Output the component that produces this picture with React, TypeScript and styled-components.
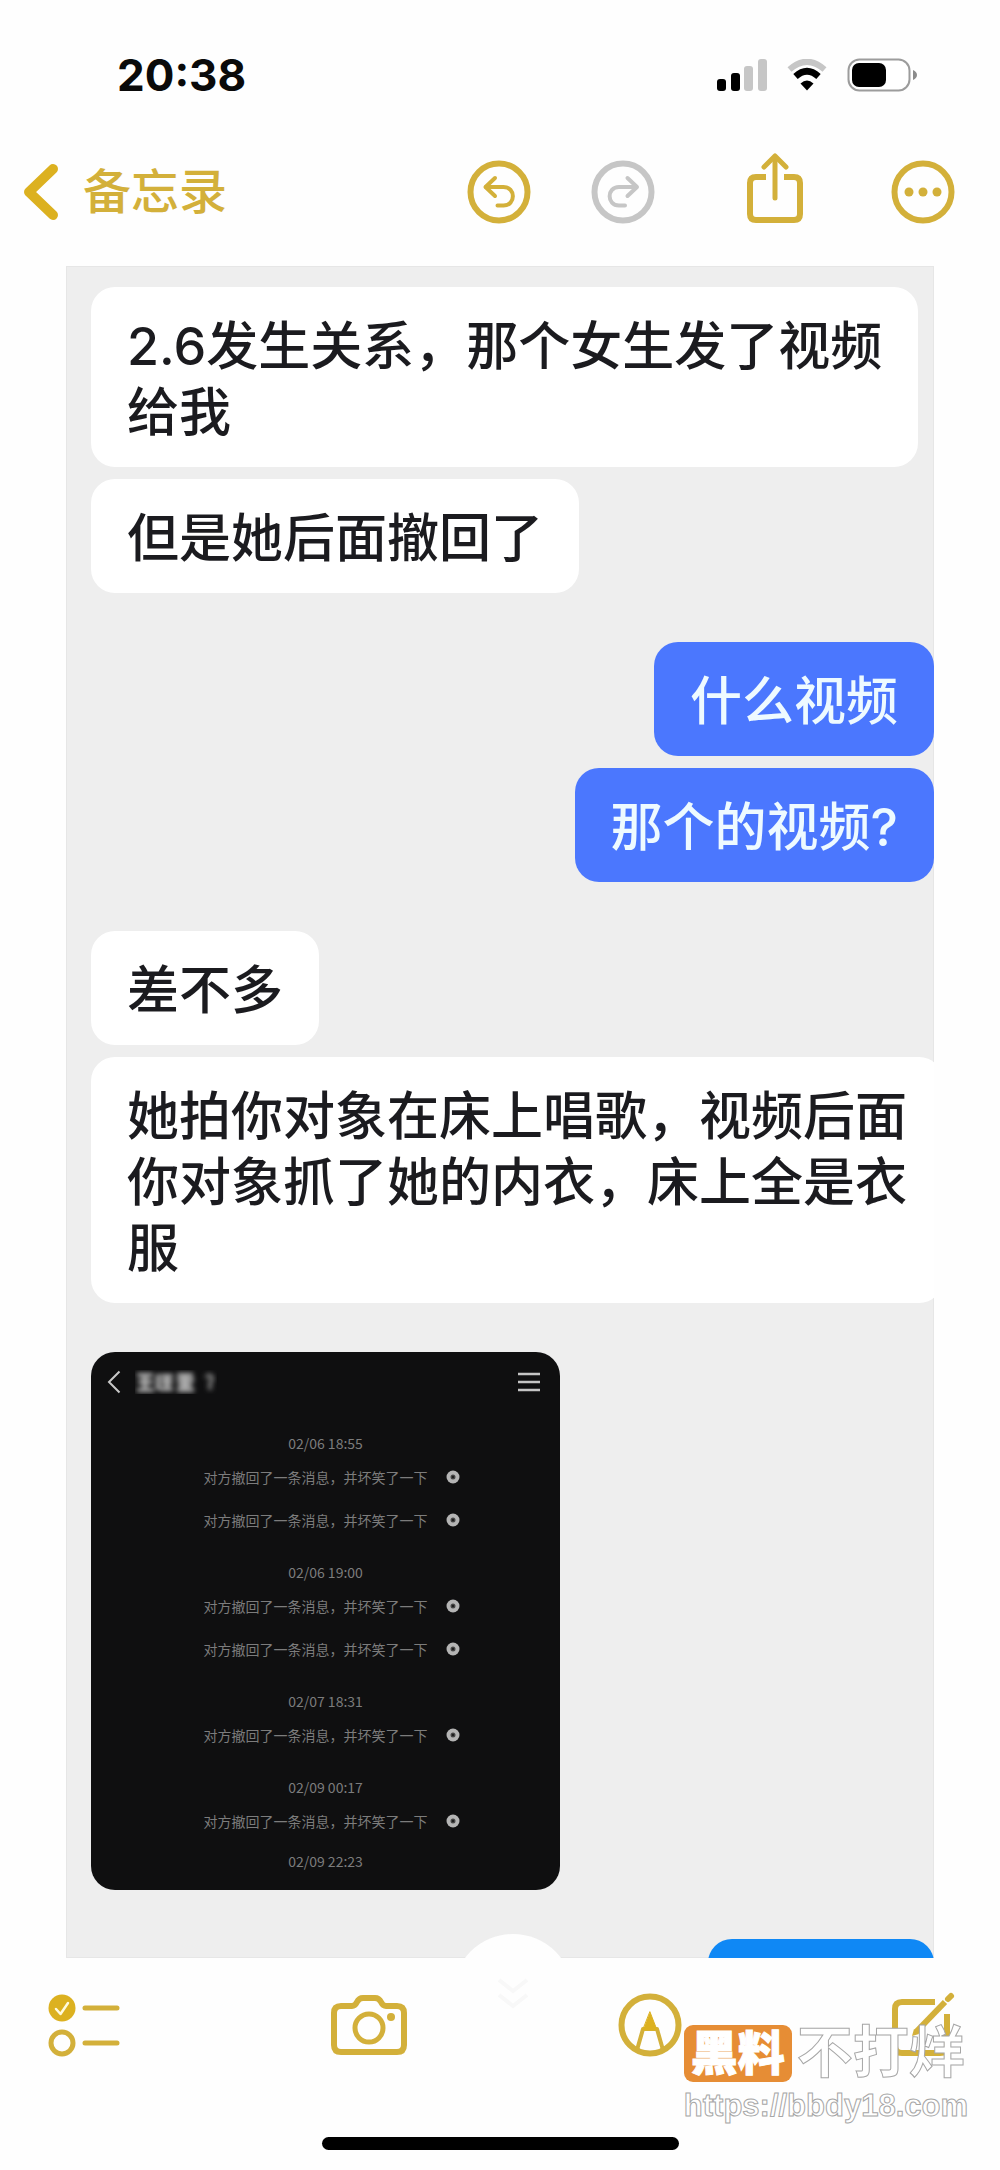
import type { ReactNode } from 'react'
import { createGlobalStyle, css, styled } from 'styled-components'

const accent = '#d3b03a'
const accentStrong = '#dcb120'
const muted = '#c6c6c6'

const GlobalStyle = createGlobalStyle`
  * {
    box-sizing: border-box;
  }
  body {
    margin: 0;
    background: #fefefe;
    font-family: Inter, 'Noto Sans CJK SC', sans-serif;
  }
`

const PageS = styled.div`
  position: relative;
  display: flex;
  flex-flow: column nowrap;
  height: 100vh;
  overflow: hidden;
`

const StatusBarS = styled.header`
  display: flex;
  flex: none;
  align-items: center;
  height: 150px;
  padding: 0 82px 0 117px;
`
const TimeS = styled.time`
  margin-right: auto;
  color: #0a0a0a;
  font-size: 44px;
  font-weight: 700;
  line-height: 52px;
`
const StatusIconsS = styled.div`
  display: flex;
  align-items: center;
  gap: 20px;
`

const NavS = styled.nav`
  display: flex;
  flex: none;
  align-items: center;
  gap: 88px;
  height: 84px;
  padding: 0 46px 0 24px;
`
const BackLinkS = styled.a`
  display: flex;
  align-items: center;
  gap: 24px;
  margin-right: auto;
  color: ${accent};
  font-size: 48px;
  font-weight: 500;
  line-height: 64px;
  text-decoration: none;
`
const NavGroupS = styled.div`
  display: flex;
  gap: 62px;
`
const IconButtonS = styled.button<{ $muted?: boolean }>`
  display: flex;
  padding: 0;
  border: 0;
  background: none;
  color: ${({ $muted }) => ($muted ? muted : accent)};

  & > svg {
    overflow: visible;
  }
`

const NoteS = styled.main`
  flex: 1;
  min-height: 0;
  margin: 32px 66px 0;
  padding: 21px 0 0 25px;
  overflow: hidden;
  background: #eeeeee;
  box-shadow: inset 0 0 0 1px #e6e6e6;
`
const ThreadS = styled.div`
  display: flex;
  flex-flow: column nowrap;
  gap: 49px;
`
const TurnS = styled.section<{ $mine?: boolean }>`
  display: flex;
  flex-flow: column nowrap;
  align-items: ${({ $mine }) => ($mine ? 'flex-end' : 'flex-start')};
  gap: 12px;
`
type BubbleTone = 'white' | 'indigo' | 'blue'
const bubbleColors: Record<BubbleTone, string> = {
  white: '#ffffff',
  indigo: '#4b77fe',
  blue: '#0f88f5',
}
const BubbleS = styled.p<{ $tone: BubbleTone }>`
  flex: none;
  min-height: 114px;
  margin: 0;
  padding: 27px 36px 21px;
  border-radius: 24px;
  font-size: 52px;
  font-weight: 500;
  line-height: 66px;
  white-space: pre;
  ${({ $tone }) => css`
    background: ${bubbleColors[$tone]};
    color: ${$tone === 'white' ? '#1b1b1f' : '#eefaff'};
  `}
`
const NextBubbleS = styled(BubbleS)`
  width: 226px;
`

const ShotS = styled.article`
  width: 469px;
  padding-bottom: 18px;
  border-radius: 24px;
  background: #0f0f10;
  color: #7c7c7c;
  font-family: 'Noto Sans CJK SC', sans-serif;
  font-size: 14px;
  line-height: 22px;
`
const ShotHeaderS = styled.header`
  display: flex;
  align-items: center;
  height: 60px;
  margin-bottom: 20px;
  padding: 0 20px 0 16px;
  gap: 14px;
`
const HiddenNameS = styled.svg`
  margin-right: auto;
`
const ShotGroupS = styled.div<{ $before: number }>`
  display: flex;
  flex-flow: column nowrap;
  align-items: center;
  gap: 21px;
  margin-top: ${({ $before }) => $before}px;
`
const ShotTimeS = styled.time`
  margin-bottom: -9px;

  &:last-child {
    margin-bottom: 0;
  }
`
const RecallS = styled.div`
  display: flex;
  align-items: center;
  gap: 18px;
  padding-left: 12px;
`

const ToolbarS = styled.footer`
  position: relative;
  display: flex;
  flex: none;
  align-items: center;
  justify-content: space-between;
  height: 134px;
  padding: 0 46px 0 48px;
`
// sits on the seam between the note and the toolbar
const ScrollDownS = styled.button`
  position: absolute;
  top: -24px;
  left: calc(50% - 47px);
  display: flex;
  align-items: center;
  justify-content: center;
  width: 120px;
  height: 120px;
  padding: 0;
  border: 0;
  border-radius: 50%;
  background: #fefefe;
`
const HomeBarS = styled.div`
  flex: none;
  align-self: center;
  width: 357px;
  height: 13px;
  margin: 45px 0 20px;
  border-radius: 7px;
  background: #000000;
`

const WatermarkS = styled.div`
  position: absolute;
  right: 32px;
  bottom: 44px;
  display: flex;
  flex-flow: column nowrap;
  gap: 4px;
  color: #ffffff;
  font-weight: 700;
`
const WatermarkTitleS = styled.div`
  display: flex;
  align-items: center;
  gap: 5px;
  font-family: 'Noto Sans CJK SC', sans-serif;
`
const WatermarkTagS = styled.span`
  padding: 0 7px 8px;
  border-radius: 9px;
  background: #e68d35;
  font-size: 47px;
  font-weight: 900;
  line-height: 49px;
  -webkit-text-stroke: 1px #ffffff;
`
const WatermarkNameS = styled.span`
  padding-bottom: 12px;
  font-size: 56px;
  line-height: 45px;
  -webkit-text-stroke: 1px #a6a6a6;
`
const WatermarkUrlS = styled.span`
  font-family: 'Liberation Sans', sans-serif;
  font-size: 31px;
  line-height: 40px;
  -webkit-text-stroke: 1px #a6a6a6;
`

const SignalIcon = () => (
  <svg width="50" height="32" viewBox="0 0 50 32" aria-hidden="true">
    <rect x="0" y="20" width="9" height="12" rx="3" fill="#000" />
    <rect x="14" y="14" width="9" height="18" rx="3" fill="#000" />
    <rect x="27" y="7" width="9" height="25" rx="3" fill={muted} />
    <rect x="41" y="0" width="9" height="32" rx="3" fill={muted} />
  </svg>
)

const WifiIcon = () => (
  <svg width="40" height="32" viewBox="0 0 40 32" fill="none" aria-hidden="true">
    <path d="M2.500 10.500 Q20 -5 37.500 10.500" stroke={muted} strokeWidth="6" />
    <path d="M8.500 17.500 Q20 7 31.500 17.500" stroke="#000" strokeWidth="6.500" />
    <path d="M13.500 24.500 Q20 18.500 26.500 24.500 L20 31.500 Z" fill="#000" />
  </svg>
)

const BatteryIcon = () => (
  <svg width="71" height="34" viewBox="0 0 71 34" aria-hidden="true">
    <rect x="1.500" y="1.500" width="61" height="31" rx="11" fill="#fff" stroke="#9c9c9c" strokeWidth="2" />
    <rect x="5" y="5" width="34" height="24" rx="7" fill="#000" />
    <path d="M66 12 Q70 14 70 17 Q70 20 66 22 Z" fill="#8b8b8b" />
  </svg>
)

const BackIcon = () => (
  <svg width="35" height="58" viewBox="0 0 35 58" fill="none" aria-hidden="true">
    <path d="M29 6 L5 29 L29 52" stroke={accentStrong} strokeWidth="10" strokeLinecap="round" strokeLinejoin="round" />
  </svg>
)

const CircleIcon = ({ children }: { children: ReactNode }) => (
  <svg
    width="62"
    height="62"
    viewBox="0 0 62 62"
    fill="none"
    stroke="currentColor"
    strokeWidth="5"
    strokeLinecap="round"
    strokeLinejoin="round"
    aria-hidden="true"
  >
    <circle cx="31" cy="31" r="28.500" strokeWidth="6" />
    {children}
  </svg>
)

const UndoIcon = () => (
  <CircleIcon>
    <path d="M27 17 L17.500 26 L27 35" strokeWidth="4" />
    <path d="M18 26 H35.500 C48 26 48 44.500 35.500 44.500 H29.500" strokeWidth="4" />
  </CircleIcon>
)

const RedoIcon = () => (
  <CircleIcon>
    <path d="M35.500 17 L45 26 L35.500 35" strokeWidth="4" />
    <path d="M44 26 H27 C14.500 26 14.500 44.500 27 44.500 H33" strokeWidth="4" />
  </CircleIcon>
)

const ShareIcon = () => (
  <svg
    width="62"
    height="82"
    viewBox="0 0 62 82"
    fill="none"
    stroke="currentColor"
    strokeWidth="6"
    strokeLinejoin="round"
    aria-hidden="true"
  >
    <path d="M24 26 H14 Q8 26 8 32 V63 Q8 69 14 69 H52 Q58 69 58 63 V32 Q58 26 52 26 H42" />
    <path d="M33 47 V6" strokeWidth="5" strokeLinecap="round" />
    <path d="M22 16 L33 5 L44 16" strokeWidth="5" strokeLinecap="round" />
  </svg>
)

const MoreIcon = () => (
  <CircleIcon>
    <g fill="currentColor" stroke="none">
      <circle cx="17" cy="31" r="4.500" />
      <circle cx="31" cy="31" r="4.500" />
      <circle cx="45" cy="31" r="4.500" />
    </g>
  </CircleIcon>
)

const ChecklistIcon = () => (
  <svg width="72" height="62" viewBox="0 0 72 62" fill="none" strokeLinecap="round" aria-hidden="true">
    <circle cx="14" cy="14" r="13.500" fill={accentStrong} />
    <path d="M8 15 L12.500 20 L20 9" stroke="#fffbe0" strokeWidth="2.500" strokeLinejoin="round" />
    <circle cx="14" cy="49" r="11" stroke="currentColor" strokeWidth="5" />
    <path d="M37 14 H69 M37 49 H69" stroke="currentColor" strokeWidth="5" />
  </svg>
)

const CameraIcon = () => (
  <svg width="76" height="62" viewBox="0 0 76 62" fill="none" stroke="currentColor" strokeLinejoin="round" aria-hidden="true">
    <path
      d="M10 12 H21 Q24 12 26 8 Q28 4 32 4 H44 Q48 4 50 8 Q52 12 55 12 H66 Q73 12 73 19 V51 Q73 58 66 58 H10 Q3 58 3 51 V19 Q3 12 10 12 Z"
      strokeWidth="6"
    />
    <circle cx="38" cy="34" r="14" strokeWidth="5" />
    <circle cx="60" cy="23" r="4" fill="currentColor" stroke="none" />
  </svg>
)

const MarkupIcon = () => (
  <CircleIcon>
    <path d="M18 56 L24 35 H38 L44 56" strokeWidth="4" />
    <path d="M31 18 L38 36 H24 Z" fill={accentStrong} stroke={accentStrong} strokeWidth="1" />
  </CircleIcon>
)

const ComposeIcon = () => (
  <svg width="62" height="64" viewBox="0 0 62 64" fill="none" stroke="currentColor" strokeWidth="6" aria-hidden="true">
    <path d="M43 9 H10 Q3 9 3 16 V53 Q3 60 10 60 H48 Q55 60 55 53 V21" />
    <path d="M24 39 L53 9" strokeWidth="6" />
    <path d="M56 6 L59 3" strokeWidth="6" strokeLinecap="round" />
    <path d="M20 43 L22 36 L27 41 Z" fill="currentColor" stroke="none" />
  </svg>
)

const GearDot = () => (
  <svg width="14" height="14" viewBox="0 0 14 14" aria-hidden="true">
    <circle cx="7" cy="7" r="6.500" fill="#b4b4b4" />
    <circle cx="7" cy="7" r="2.500" fill="#4a4a4a" />
    <path d="M7 5.500 L8.500 7 L7 8.500 L5.500 7 Z" fill="#191919" />
  </svg>
)

const recallText = '对方撤回了一条消息，并坏笑了一下'
const recallGroups = [
  { time: '02/06 18:55', count: 2, before: 0 },
  { time: '02/06 19:00', count: 2, before: 30 },
  { time: '02/07 18:31', count: 1, before: 30 },
  { time: '02/09 00:17', count: 1, before: 30 },
  { time: '02/09 22:23', count: 0, before: 18 },
]

const RecallShot = () => (
  <ShotS>
    <ShotHeaderS>
      <svg width="14" height="24" viewBox="0 0 14 24" fill="none" aria-hidden="true">
        <path d="M12.500 1.500 L2 12 L12.500 22.500" stroke="#c8c8c8" strokeWidth="2" />
      </svg>
      <HiddenNameS width="82" height="24" viewBox="0 0 82 24" aria-hidden="true">
        <filter id="smudge" x="-20%" y="-40%" width="140%" height="180%">
          <feGaussianBlur stdDeviation="2.500" />
        </filter>
        <g filter="url(#smudge)" stroke="#b4b4b4" strokeWidth="4" fill="none">
          <path d="M2 5 H18 M3 12 H18 M2 20 H19 M10 4 V20" />
          <path d="M23 4 V20 M26 6 H38 M26 12 H38 M25 19 H38 M32 6 V19" />
          <path d="M42 5 H58 M42 10 H59 M43 15 H57 M42 20 H59 M50 3 V20" />
          <path d="M71 8 Q74 3 77 7 Q78 10 75 13 V20" stroke="#777" />
        </g>
      </HiddenNameS>
      <svg width="22" height="20" viewBox="0 0 22 20" aria-hidden="true">
        <path d="M0 2 H22 M0 10 H22 M0 18 H22" stroke="#c4c4c4" strokeWidth="2.500" />
      </svg>
    </ShotHeaderS>
    {recallGroups.map(({ time, count, before }) => (
      <ShotGroupS key={time} $before={before}>
        <ShotTimeS>{time}</ShotTimeS>
        {Array.from({ length: count }, (_, i) => (
          <RecallS key={i}>
            {recallText}
            <GearDot />
          </RecallS>
        ))}
      </ShotGroupS>
    ))}
  </ShotS>
)

export default function App() {
  return (
    <>
      <GlobalStyle />
      <PageS>
        <StatusBarS>
          <TimeS>20:38</TimeS>
          <StatusIconsS>
            <SignalIcon />
            <WifiIcon />
            <BatteryIcon />
          </StatusIconsS>
        </StatusBarS>
        <NavS>
          <BackLinkS href="#notes">
            <BackIcon />
            备忘录
          </BackLinkS>
          <NavGroupS>
            <IconButtonS aria-label="撤销">
              <UndoIcon />
            </IconButtonS>
            <IconButtonS aria-label="重做" $muted>
              <RedoIcon />
            </IconButtonS>
          </NavGroupS>
          <IconButtonS aria-label="共享">
            <ShareIcon />
          </IconButtonS>
          <IconButtonS aria-label="更多">
            <MoreIcon />
          </IconButtonS>
        </NavS>
        <NoteS>
          <ThreadS>
            <TurnS>
              <BubbleS $tone="white">{'2.6发生关系，那个女生发了视频\n给我'}</BubbleS>
              <BubbleS $tone="white">但是她后面撤回了</BubbleS>
            </TurnS>
            <TurnS $mine>
              <BubbleS $tone="indigo">什么视频</BubbleS>
              <BubbleS $tone="indigo">那个的视频?</BubbleS>
            </TurnS>
            <TurnS>
              <BubbleS $tone="white">差不多</BubbleS>
              <BubbleS $tone="white">{'她拍你对象在床上唱歌，视频后面\n你对象抓了她的内衣，床上全是衣\n服'}</BubbleS>
            </TurnS>
            <TurnS>
              <RecallShot />
            </TurnS>
            <TurnS $mine>
              <NextBubbleS $tone="blue" />
            </TurnS>
          </ThreadS>
        </NoteS>
        <ToolbarS>
          <ScrollDownS aria-label="滚动到底部">
            <svg width="34" height="34" viewBox="0 0 34 34" fill="none" stroke="#f8f8f8" strokeWidth="4" aria-hidden="true">
              <path d="M3 3 L17 14 L31 3 M3 18 L17 29 L31 18" />
            </svg>
          </ScrollDownS>
          <IconButtonS aria-label="核对清单">
            <ChecklistIcon />
          </IconButtonS>
          <IconButtonS aria-label="相机">
            <CameraIcon />
          </IconButtonS>
          <IconButtonS aria-label="标记">
            <MarkupIcon />
          </IconButtonS>
          <IconButtonS aria-label="新建备忘录">
            <ComposeIcon />
          </IconButtonS>
        </ToolbarS>
        <HomeBarS />
        <WatermarkS>
          <WatermarkTitleS>
            <WatermarkTagS>黑料</WatermarkTagS>
            <WatermarkNameS>不打烊</WatermarkNameS>
          </WatermarkTitleS>
          <WatermarkUrlS>https://bbdy18.com</WatermarkUrlS>
        </WatermarkS>
      </PageS>
    </>
  )
}
